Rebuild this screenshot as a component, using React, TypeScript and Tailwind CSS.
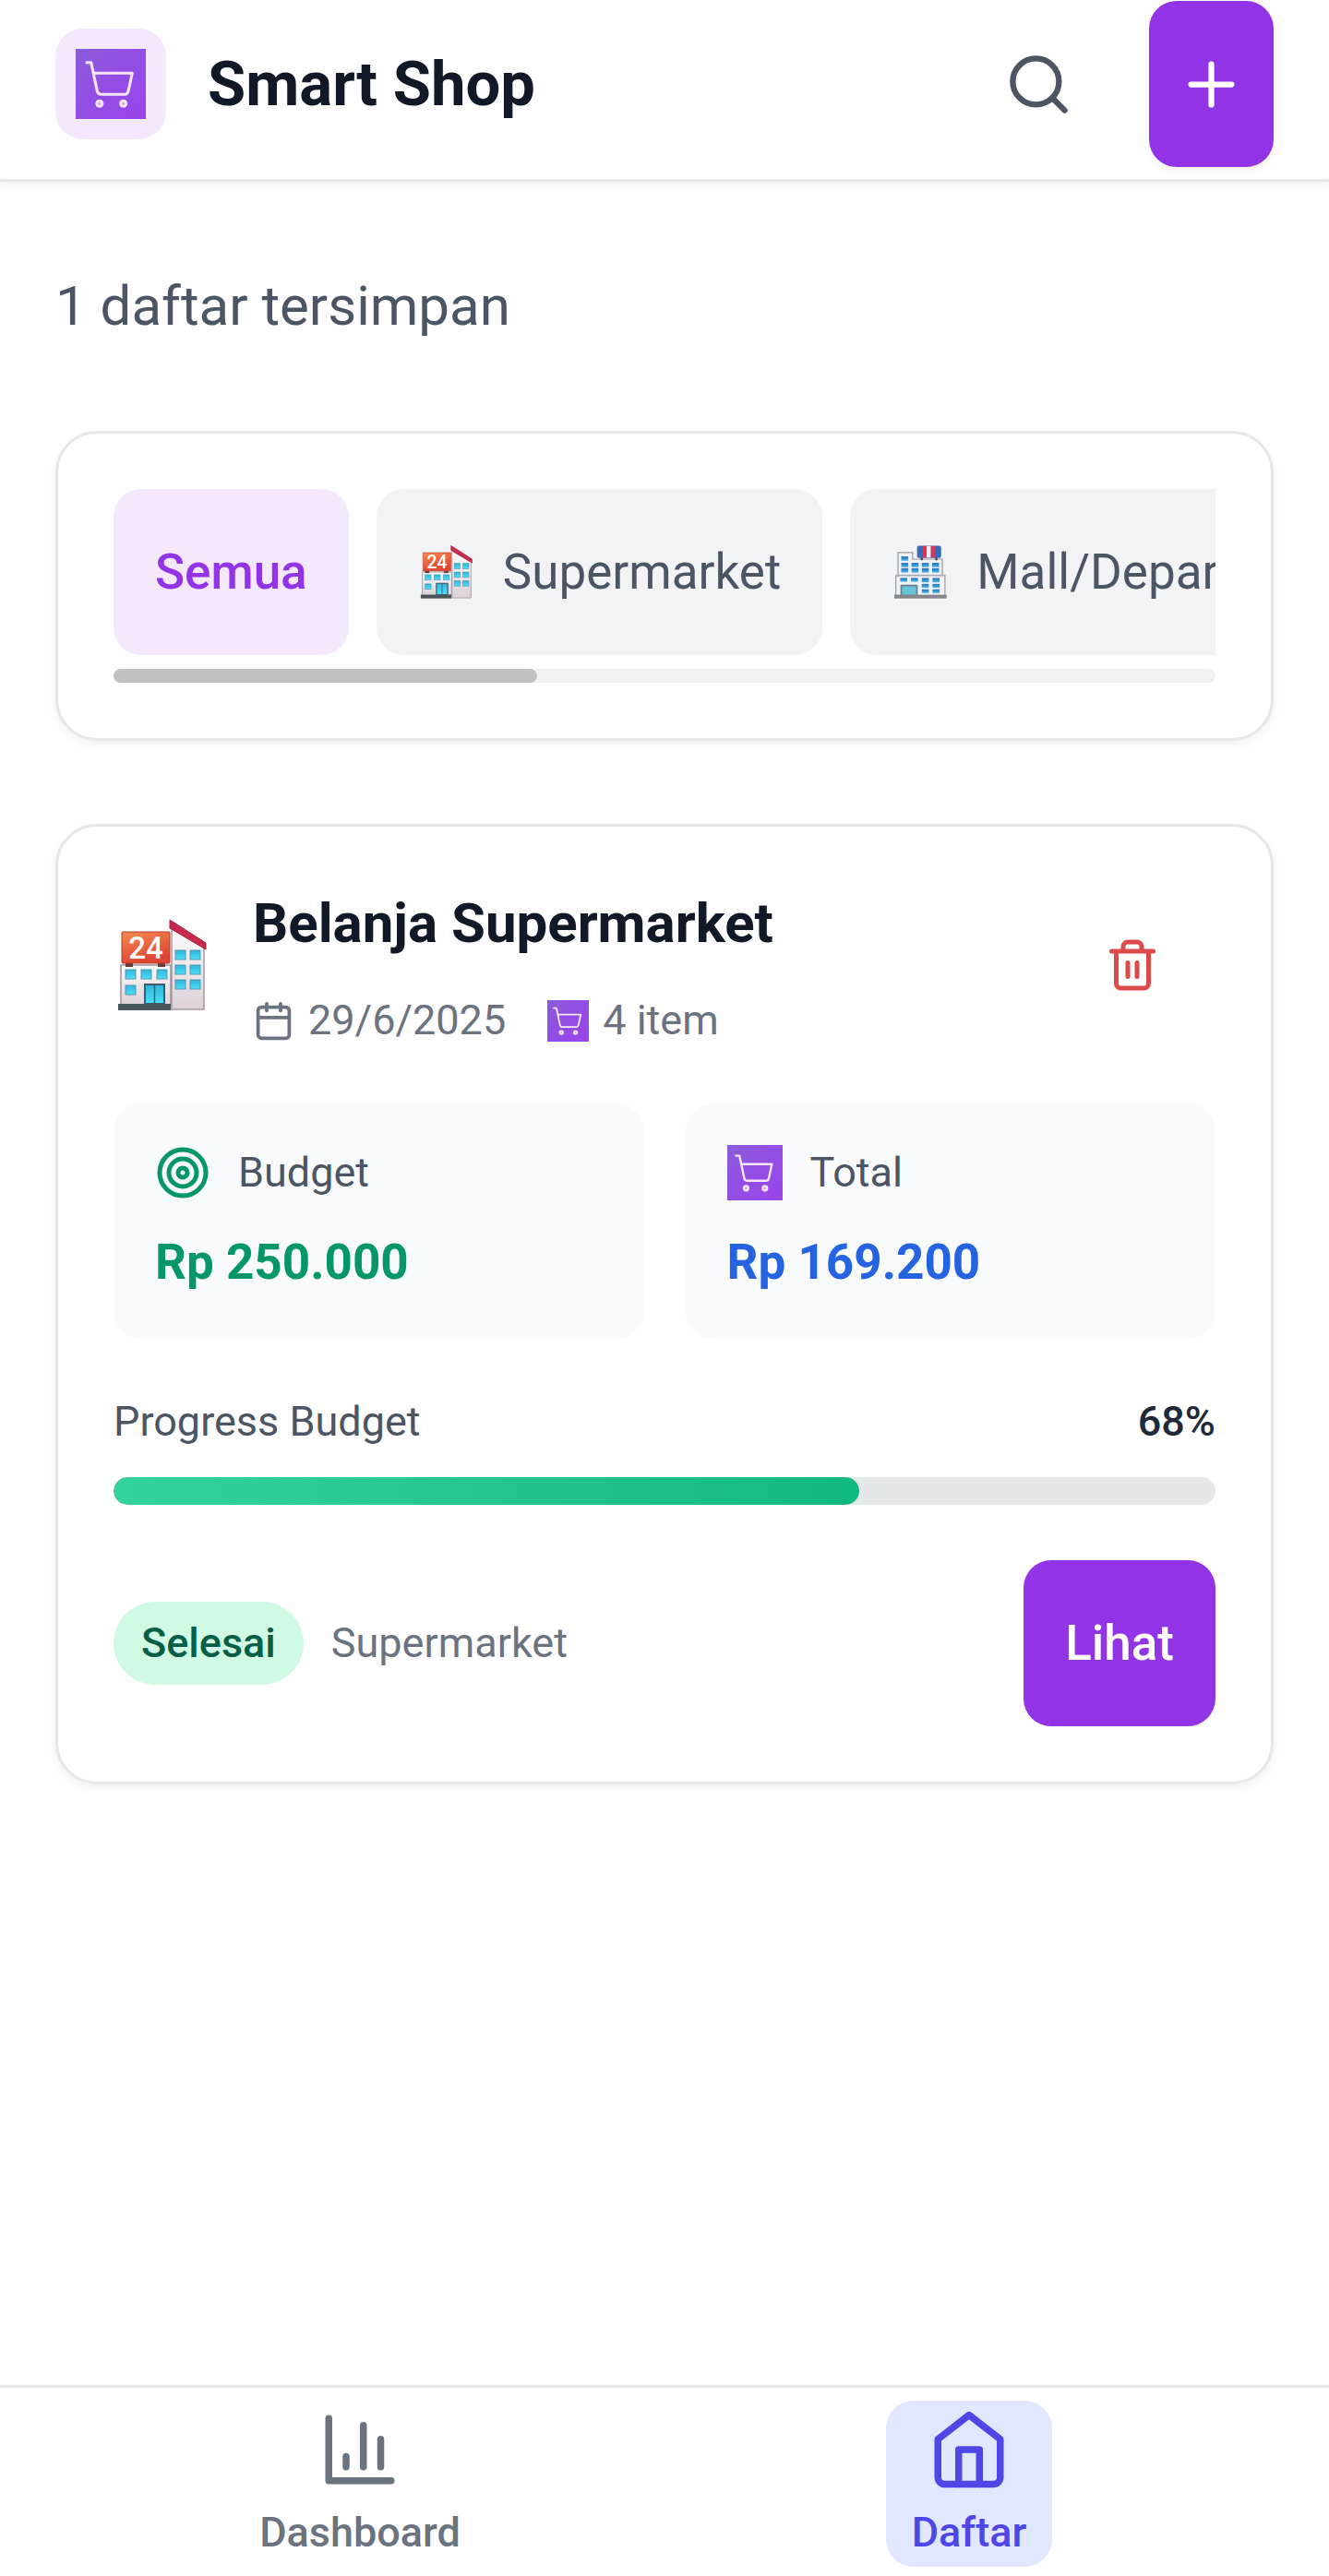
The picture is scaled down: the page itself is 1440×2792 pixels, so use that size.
import { useState } from 'react'
import { Calendar, Plus, Search } from 'lucide-react'

interface IconProps {
  className?: string
}

const formatRupiah = (value: number) => `Rp ${value.toLocaleString('id-ID')}`

function CartTile({ className }: IconProps) {
  return (
    <svg viewBox="0 0 75 75" className={className} aria-hidden="true">
      <defs>
        <linearGradient id="cart-bg" x1="0" y1="0" x2="1" y2="1">
          <stop offset="0" stopColor="#8b5cd9" />
          <stop offset="0.5" stopColor="#934de4" />
          <stop offset="1" stopColor="#9b45ea" />
        </linearGradient>
      </defs>
      <rect width="75" height="75" fill="url(#cart-bg)" />
      <g fill="none" stroke="#f7e6fd" strokeWidth="3" strokeLinejoin="round">
        <path d="M10.5 14.5h6l6.5 30.500q.8 3.500 4 3.500h25.500q3 0 3.700-3.200L60.500 26H19.500" />
      </g>
      <g fill="#c9a3f3" stroke="#f7e6fd" strokeWidth="3">
        <circle cx="25.5" cy="58.5" r="3" />
        <circle cx="51" cy="58.5" r="3" />
      </g>
    </svg>
  )
}

function StoreEmoji({ className }: IconProps) {
  return (
    <svg viewBox="0 0 106 106" className={className} aria-hidden="true">
      <defs>
        <linearGradient id="store-sign" x1="0" y1="0" x2="0.4" y2="1">
          <stop offset="0" stopColor="#f58a4b" />
          <stop offset="1" stopColor="#de4436" />
        </linearGradient>
        <linearGradient id="store-wall" x1="0" y1="0" x2="0" y2="1">
          <stop offset="0" stopColor="#fdfcfd" />
          <stop offset="1" stopColor="#ddd2da" />
        </linearGradient>
        <linearGradient id="store-glass" x1="0" y1="0" x2="0" y2="1">
          <stop offset="0" stopColor="#2fb5da" />
          <stop offset="1" stopColor="#4be0fb" />
        </linearGradient>
      </defs>
      <path d="M63 10v91h35V34z" fill="url(#store-wall)" stroke="#a59ba3" strokeWidth="1.5" />
      <path d="M61 4l39 25v7L61 13z" fill="#c92a4b" stroke="#9d2340" strokeWidth="1" />
      <rect x="8" y="53" width="54" height="43" fill="url(#store-wall)" stroke="#9a9198" strokeWidth="1.5" />
      <rect x="13" y="50" width="8" height="5" fill="#6b3b3b" />
      <rect x="48" y="50" width="8" height="5" fill="#6b3b3b" />
      <rect x="9" y="17" width="52" height="34" rx="1" fill="url(#store-sign)" stroke="#b5382c" strokeWidth="1" />
      <text x="35" y="46" textAnchor="middle" fontSize="33" fontWeight="500" fill="#fff" fontFamily="Roboto, sans-serif">24</text>
      <g fill="url(#store-glass)" stroke="#5796ad" strokeWidth="1">
        <rect x="13" y="58" width="11" height="10" />
        <rect x="30" y="58" width="11" height="10" />
        <rect x="47" y="58" width="11" height="10" />
        <rect x="13" y="75" width="11" height="10" />
        <rect x="67" y="37" width="11" height="10" />
        <rect x="83" y="37" width="11" height="10" />
        <rect x="67" y="53" width="11" height="10" />
        <rect x="83" y="53" width="11" height="10" />
        <rect x="67" y="69" width="11" height="10" />
        <rect x="83" y="69" width="11" height="10" />
      </g>
      <rect x="34" y="74" width="21" height="21" fill="url(#store-glass)" stroke="#3e5c66" strokeWidth="2" />
      <path d="M44.5 74v21" stroke="#3e5c66" strokeWidth="1.5" />
      <rect x="5" y="95" width="57" height="7" fill="#48555b" />
    </svg>
  )
}

function MallEmoji({ className }: IconProps) {
  return (
    <svg viewBox="0 0 106 106" className={className} aria-hidden="true">
      <defs>
        <linearGradient id="mall-glass" x1="0" y1="0" x2="0" y2="1">
          <stop offset="0" stopColor="#2474b5" />
          <stop offset="1" stopColor="#45b5ee" />
        </linearGradient>
      </defs>
      <path d="M12 17h27v12h55v30h5v38H8V60h4z" fill="#f1f2f5" stroke="#99979f" strokeWidth="2" />
      <path d="M8 59h91" stroke="#aeacb4" strokeWidth="3" />
      <path d="M56 25v6M83 25v6" stroke="#4b4350" strokeWidth="4" />
      <rect x="48" y="5" width="43" height="21" rx="2" fill="#2a6fc0" stroke="#54608a" strokeWidth="1.5" />
      <rect x="57" y="5" width="8" height="21" fill="#dd3355" />
      <rect x="65" y="5" width="8" height="21" fill="#f5edf2" />
      <rect x="73" y="5" width="8" height="21" fill="#dd3355" />
      <g fill="url(#mall-glass)">
        <rect x="18" y="24" width="13" height="8" />
        <rect x="18" y="36" width="13" height="8" />
        <rect x="18" y="46" width="13" height="8" />
        <rect x="37" y="36" width="13" height="8" />
        <rect x="37" y="46" width="13" height="8" />
        <rect x="56" y="36" width="13" height="8" />
        <rect x="56" y="46" width="13" height="8" />
        <rect x="75" y="36" width="13" height="8" />
        <rect x="75" y="46" width="13" height="8" />
        <rect x="16" y="64" width="13" height="7" />
        <rect x="36" y="64" width="13" height="7" />
        <rect x="56" y="64" width="13" height="8" />
        <rect x="76" y="64" width="13" height="8" />
        <rect x="56" y="75" width="13" height="7" />
        <rect x="76" y="75" width="13" height="7" />
        <rect x="56" y="85" width="13" height="7" />
        <rect x="76" y="85" width="13" height="7" />
      </g>
      <rect x="18" y="78" width="29" height="19" fill="#62c6d6" stroke="#6e7f8b" strokeWidth="3" />
      <rect x="5" y="95" width="97" height="7" fill="#85858d" />
    </svg>
  )
}

function TrashIcon({ className }: IconProps) {
  return (
    <svg viewBox="0 0 24 24" fill="none" stroke="currentColor" strokeWidth="2" strokeLinecap="round" strokeLinejoin="round" className={className} aria-hidden="true">
      <path d="M3 6h18M19 6v14a2 2 0 0 1-2 2H7a2 2 0 0 1-2-2V6M8 6V4a2 2 0 0 1 2-2h4a2 2 0 0 1 2 2v2M10 11v6M14 11v6" />
    </svg>
  )
}

function TargetIcon({ className }: IconProps) {
  return (
    <svg viewBox="0 0 24 24" fill="none" stroke="currentColor" strokeWidth="2" className={className} aria-hidden="true">
      <circle cx="12" cy="12" r="10" />
      <circle cx="12" cy="12" r="6" />
      <circle cx="12" cy="12" r="2" />
    </svg>
  )
}

function ChartIcon({ className }: IconProps) {
  return (
    <svg viewBox="0 0 24 24" fill="none" stroke="currentColor" strokeWidth="2" strokeLinecap="round" strokeLinejoin="round" className={className} aria-hidden="true">
      <path d="M3 3v18h18M18 17V9M13 17V5M8 17v-3" />
    </svg>
  )
}

function HomeIcon({ className }: IconProps) {
  return (
    <svg viewBox="0 0 24 24" fill="none" stroke="currentColor" strokeWidth="2" strokeLinecap="round" strokeLinejoin="round" className={className} aria-hidden="true">
      <path d="M3 9l9-7 9 7v11a2 2 0 0 1-2 2H5a2 2 0 0 1-2-2z" />
      <path d="M9 22V12h6v10" />
    </svg>
  )
}

const categories = [
  { id: 'semua', label: 'Semua', icon: null },
  { id: 'supermarket', label: 'Supermarket', icon: StoreEmoji },
  { id: 'mall', label: 'Mall/Department Store', icon: MallEmoji },
]

const navItems = [
  { path: '#dashboard', label: 'Dashboard', icon: ChartIcon },
  { path: '#daftar', label: 'Daftar', icon: HomeIcon },
]

const list = {
  name: 'Belanja Supermarket',
  date: '29/6/2025',
  items: 4,
  budget: 250000,
  total: 169200,
  category: 'Supermarket',
}

export default function App() {
  const [category, setCategory] = useState('semua')
  const progress = (list.total / list.budget) * 100

  return (
    <div className="min-h-screen flex flex-col bg-[#fefefe] font-[Roboto,sans-serif] text-gray-900">
      {/* Header */}
      <header className="flex items-center justify-between px-[60px] pt-px pb-[13px] border-b-3 border-[#e5e7eb] shadow-[0_4px_8px_rgba(0,0,0,0.05)]">
        <div className="flex items-center gap-[45px]">
          <div className="p-[22px] rounded-[30px] bg-[#f3e8fc]">
            <CartTile className="size-[76px]" />
          </div>
          <h1 className="text-[67px] leading-[90px] font-bold text-[#111827]">Smart Shop</h1>
        </div>
        <div className="flex items-center gap-[30px]">
          <button aria-label="Cari" className="size-[180px] flex items-center justify-center text-[#4b5563]">
            <Search className="size-[75px]" />
          </button>
          <button aria-label="Tambah daftar" className="h-[180px] px-[30px] rounded-[30px] bg-[#9333e6] text-white shadow-[0_4px_8px_rgba(0,0,0,0.05)]">
            <Plus className="size-[75px]" />
          </button>
        </div>
      </header>

      <main className="flex-1 flex flex-col gap-[90px] px-[60px] py-[90px]">
        <p className="text-[60px] leading-[90px] text-[#4b5563]">1 daftar tersimpan</p>

        {/* Category filter */}
        <section className="p-[60px] rounded-[45px] border-3 border-[#e5e7eb] shadow-[0_4px_8px_rgba(0,0,0,0.05)]">
          <div className="flex gap-[30px] overflow-hidden">
            {categories.map((item) => {
              const Icon = item.icon
              return (
                <button
                  key={item.id}
                  onClick={() => setCategory(item.id)}
                  className={`shrink-0 h-[180px] px-[45px] flex items-center gap-[30px] rounded-[30px] text-[53px] leading-[75px] whitespace-nowrap ${
                    category === item.id
                      ? 'bg-[#f3e8fc] text-[#9333e6] font-medium'
                      : 'bg-[#f1f3f5] text-[#4b5563]'
                  }`}
                >
                  {Icon && <Icon className="size-[62px]" />}
                  {item.label}
                </button>
              )
            })}
          </div>
          <div className="mt-[15px] h-[15px] rounded-lg bg-[#f1f1f1]">
            <div className="h-full w-5/13 rounded-lg bg-[#c1c1c1]" />
          </div>
        </section>

        {/* Shopping list card */}
        <article className="flex flex-col gap-[60px] p-[60px] rounded-[45px] border-3 border-[#e5e7eb] shadow-[0_4px_8px_rgba(0,0,0,0.05)]">
          <div className="flex items-center justify-between">
            <div className="flex items-center gap-[45px]">
              <StoreEmoji className="size-[106px]" />
              <div className="flex flex-col gap-[30px]">
                <h2 className="text-[60px] leading-[90px] font-bold text-[#111827]">{list.name}</h2>
                <div className="flex items-center gap-[45px] text-[45px] leading-[60px] text-[#6b7280]">
                  <span className="flex items-center gap-[15px]">
                    <Calendar className="size-[45px]" />
                    {list.date}
                  </span>
                  <span className="flex items-center gap-[15px]">
                    <CartTile className="size-[45px]" />
                    {list.items} item
                  </span>
                </div>
              </div>
            </div>
            <button aria-label="Hapus daftar" className="size-[180px] flex items-center justify-center text-[#dc4a4a]">
              <TrashIcon className="size-[60px]" />
            </button>
          </div>

          <div className="grid grid-cols-2 gap-[45px]">
            <div className="flex flex-col gap-[30px] p-[45px] rounded-[30px] bg-[#f8fafc]">
              <div className="flex items-center gap-[30px] text-[45px] leading-[60px] text-[#4b5563]">
                <TargetIcon className="size-[60px] text-[#059669]" />
                Budget
              </div>
              <div className="text-[53px] leading-[75px] font-bold text-[#059669]">{formatRupiah(list.budget)}</div>
            </div>
            <div className="flex flex-col gap-[30px] p-[45px] rounded-[30px] bg-[#f8fafc]">
              <div className="flex items-center gap-[30px] text-[45px] leading-[60px] text-[#4b5563]">
                <CartTile className="size-[60px]" />
                Total
              </div>
              <div className="text-[53px] leading-[75px] font-bold text-[#2563e0]">{formatRupiah(list.total)}</div>
            </div>
          </div>

          <div className="flex flex-col gap-[30px]">
            <div className="flex justify-between text-[45px] leading-[60px]">
              <span className="text-[#4b5563]">Progress Budget</span>
              <span className="font-medium text-[#1f2937]">{Math.round(progress)}%</span>
            </div>
            <div className="h-[30px] rounded-full bg-[#e5e7eb] overflow-hidden">
              <div className="h-full rounded-full bg-linear-to-r from-[#34d399] to-[#10b981]" style={{ width: `${progress}%` }} />
            </div>
          </div>

          <div className="flex items-center justify-between">
            <div className="flex items-center gap-[30px] text-[45px] leading-[60px]">
              <span className="px-[30px] py-[15px] rounded-full bg-[#d1fae5] font-medium text-[#065f46]">Selesai</span>
              <span className="text-[#6b7280]">{list.category}</span>
            </div>
            <button className="h-[180px] px-[45px] rounded-[30px] bg-[#9333e6] text-[53px] leading-[75px] font-medium text-white">Lihat</button>
          </div>
        </article>
      </main>

      {/* Bottom navigation */}
      <nav className="grid grid-cols-2 justify-items-center px-[60px] pt-[14px] pb-[10px] border-t-3 border-[#e5e7eb]">
        {navItems.map((item) => {
          const Icon = item.icon
          const isActive = item.path === '#daftar'
          return (
            <a
              key={item.path}
              href={item.path}
              className={`h-[180px] min-w-[180px] flex flex-col items-center justify-center gap-[15px] rounded-[30px] text-[45px] leading-[60px] font-medium ${
                isActive ? 'bg-[#e0e7ff] text-[#4f46e5]' : 'text-[#6b7280]'
              }`}
            >
              <Icon className="size-[90px]" />
              {item.label}
            </a>
          )
        })}
      </nav>
    </div>
  )
}
